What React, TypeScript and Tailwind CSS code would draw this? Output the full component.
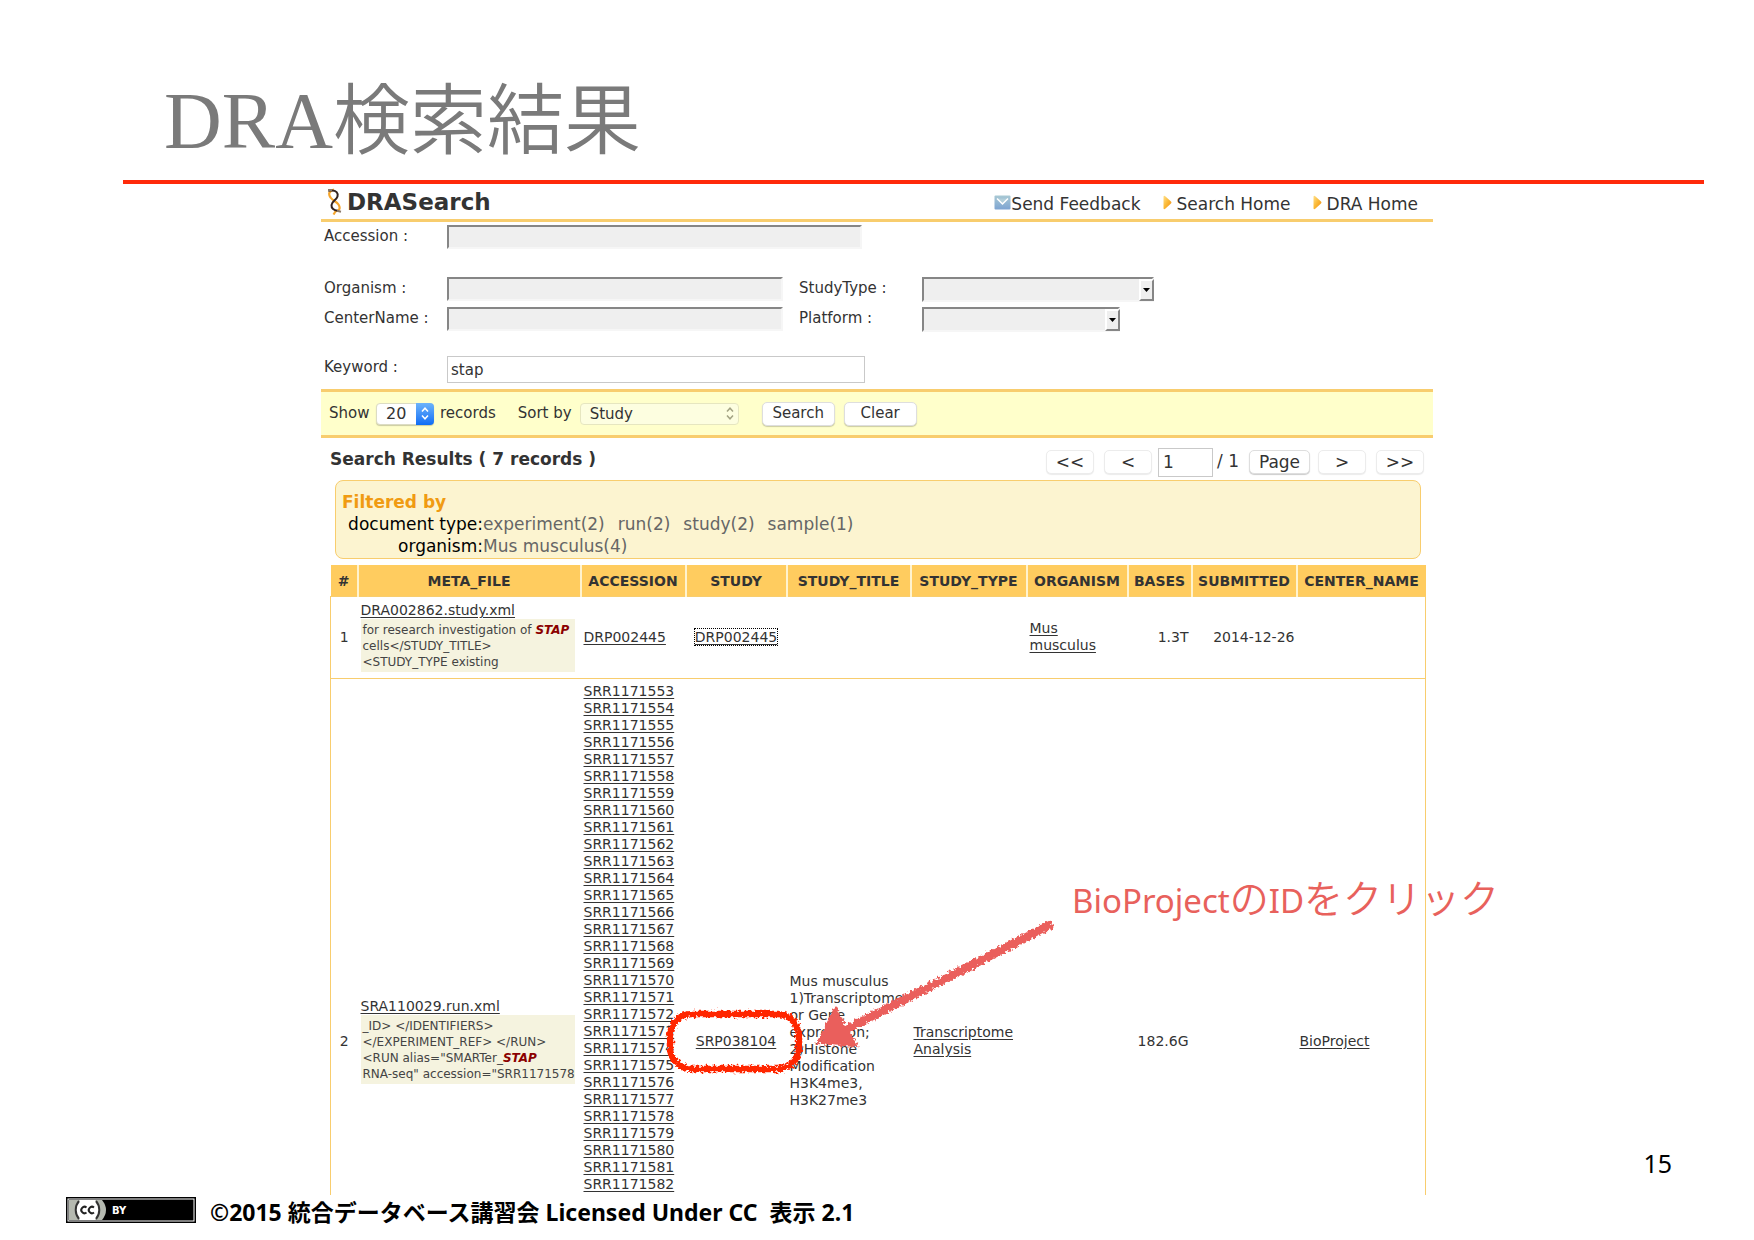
import React from "react";

const INSET =
  "block bg-[#efefef] border-2 border-t-[#868686] border-l-[#868686] border-r-[#f6f6f6] border-b-[#f6f6f6] outline-none";

const PUSH =
  "flex items-center justify-center rounded-[5px] border border-[#dedede] bg-white shadow-[0_1px_1px_rgba(0,0,0,0.2)]";

const PUSH_FAINT =
  "flex h-6 w-12 items-center justify-center rounded-[5px] border border-[#ececec] bg-white pt-0.5 shadow-[0_1px_1px_rgba(0,0,0,0.08)]";

const runs = Array.from({ length: 30 }, (_, i) => "SRR" + (1171553 + i));

function Helix() {
  return (
    <svg className="h-[27px] w-4" viewBox="0 0 16 27" fill="none" aria-hidden="true">
      <path d="M7 1.500C2 3 1 6 3.500 9.500c2 3 6 4 8 7 2.500 4 .5 6.500-3 7l-2 3" stroke="#f5a52c" strokeWidth="2.200" />
      <path d="M1 2.500h4c4 0 6.500 2.500 5.500 6C9.500 12 5 13 4.500 17c-.3 3.500 2.500 5.500 6 5.800" stroke="#33231f" strokeWidth="2" />
      <path d="M1 2h4M10 22.800l4 1" stroke="#8b7a6c" strokeWidth="2" />
    </svg>
  );
}

function Envelope() {
  return (
    <svg className="mb-1 h-[15px] w-[17px]" viewBox="0 0 17 15" aria-hidden="true">
      <defs>
        <linearGradient id="env" x1="0" y1="0" x2="0" y2="1">
          <stop offset="0" stopColor="#a9c9d4" />
          <stop offset="1" stopColor="#7da4d2" />
        </linearGradient>
      </defs>
      <rect x="0.500" y="0.500" width="16" height="14" rx="1" fill="url(#env)" />
      <path d="M3 3.500l5.500 5.500L14 3.500" fill="#b3cfda" stroke="#fff" strokeWidth="1.500" />
    </svg>
  );
}

function Marker() {
  return (
    <svg className="mb-1 h-[15px] w-[9px]" viewBox="0 0 9 15" aria-hidden="true">
      <defs>
        <linearGradient id="mark" x1="0" y1="0" x2="1" y2="1">
          <stop offset="0" stopColor="#ffe08a" />
          <stop offset="0.5" stopColor="#fbb834" />
          <stop offset="1" stopColor="#ee8a1c" />
        </linearGradient>
      </defs>
      <path d="M0.500 1.500Q1 0 2.500 1.500L8 6.500Q9 7.500 8 8.500L2.500 13.500Q1 15 0.500 13.500Z" fill="url(#mark)" />
    </svg>
  );
}

function InsetSelect({ id, width }: { id: string; width: string }) {
  return (
    <div className={"relative " + width}>
      <select id={id} className={INSET + " h-[25px] w-full appearance-none"} />
      <span className="pointer-events-none absolute top-0.5 right-0 flex h-[22px] w-[15px] items-center justify-center border-2 border-t-white border-r-[#868686] border-b-[#868686] border-l-white bg-[#efefef]">
        <svg className="h-1 w-[7px]" viewBox="0 0 7 4" aria-hidden="true">
          <path d="M0 0h7L3.500 4z" fill="#000" />
        </svg>
      </span>
    </div>
  );
}

function UpDown({ color }: { color: string }) {
  return (
    <svg className="h-[13px] w-2" viewBox="0 0 8 13" fill="none" stroke={color} strokeWidth="1.500" aria-hidden="true">
      <path d="M1 4.500L4 1.200 7 4.500M1 8.500l3 3.300L7 8.500" />
    </svg>
  );
}

function Link({ children, className = "" }: { children: React.ReactNode; className?: string }) {
  return (
    <a href="#" className={"underline underline-offset-2 " + className}>
      {children}
    </a>
  );
}

function Hit() {
  return <em className="font-bold text-[#8b0000]">STAP</em>;
}

function SearchForm() {
  const label = "w-[123px] shrink-0 leading-[22px]";
  return (
    <form className="text-[15px]" onSubmit={(e) => e.preventDefault()}>
      <div className="flex flex-col pt-[3px] pl-[3px]">
        <div className="flex items-start">
          <label htmlFor="accession" className={label}>Accession :</label>
          <input id="accession" className={INSET + " h-6 w-[415px]"} />
        </div>
        <div className="mt-7 flex items-start">
          <label htmlFor="organism" className={label}>Organism :</label>
          <input id="organism" className={INSET + " h-6 w-[336px]"} />
          <label htmlFor="studytype" className={label + " ml-4"}>StudyType :</label>
          <InsetSelect id="studytype" width="w-[232px]" />
        </div>
        <div className="mt-[5px] flex items-start">
          <label htmlFor="center" className={label}>CenterName :</label>
          <input id="center" className={INSET + " h-6 w-[336px]"} />
          <label htmlFor="platform" className={label + " ml-4"}>Platform :</label>
          <InsetSelect id="platform" width="w-[198px]" />
        </div>
        <div className="mt-6 mb-1.5 flex items-start">
          <label htmlFor="keyword" className={label}>Keyword :</label>
          <input id="keyword" defaultValue="stap" className="h-[27px] w-[418px] border border-[#c9c9c9] px-[3px] outline-none" />
        </div>
      </div>
      <div className="flex h-[49px] items-center border-y-[3px] border-[#f8cd6e] bg-[#ffffcb] pl-2">
        <label htmlFor="show" className="w-[47px]">Show</label>
        <div className="relative">
          <select id="show" className="block h-[22px] w-[58px] appearance-none rounded border border-[#dcdcc4] bg-white pl-[9px] text-[16px] leading-5 shadow-[0_1px_1px_rgba(0,0,0,0.2)]">
            <option>20</option>
          </select>
          <span className="pointer-events-none absolute top-0 right-0 flex h-[22px] w-[18px] items-center justify-center rounded-r bg-linear-to-b from-[#6cb3fa] to-[#0a6cf5]">
            <UpDown color="#fff" />
          </span>
        </div>
        <span className="ml-1.5">records</span>
        <label htmlFor="sort" className="ml-[22px]">Sort by</label>
        <div className="relative ml-2">
          <select id="sort" className="block h-[22px] w-[159px] appearance-none rounded border border-[#e6e6c0] bg-[#fdfee0] pl-[9px] leading-5">
            <option>Study</option>
          </select>
          <span className="pointer-events-none absolute top-0 right-[5px] flex h-[22px] items-center">
            <UpDown color="#a3a383" />
          </span>
        </div>
        <button type="submit" className={PUSH + " ml-[23px] h-6 w-[73px]"}>Search</button>
        <button type="button" className={PUSH + " ml-[9px] h-6 w-[73px]"}>Clear</button>
      </div>
    </form>
  );
}

function ResultsTable() {
  const th = "border-l-2 border-[#fff3cf] p-0 pt-0.5 text-center font-bold";
  const td = "px-[3px] py-0";
  const snippet = "w-[214px] bg-[#f5f3df] px-0.5 pt-[3px] pb-0.5 text-[12px] leading-4 whitespace-nowrap text-[#444]";
  return (
    <table className="w-full table-fixed border-collapse text-[14px] leading-[17px]">
      <colgroup>
        <col className="w-[27px]" />
        <col className="w-[223px]" />
        <col className="w-[105px]" />
        <col className="w-[101px]" />
        <col className="w-[124px]" />
        <col className="w-[116px]" />
        <col className="w-[101px]" />
        <col className="w-[64px]" />
        <col className="w-[105px]" />
        <col />
      </colgroup>
      <thead>
        <tr className="h-[31px] bg-[#ffcc5f]">
          <th className="p-0 pt-0.5 text-center">#</th>
          <th className={th}>META_FILE</th>
          <th className={th}>ACCESSION</th>
          <th className={th}>STUDY</th>
          <th className={th}>STUDY_TITLE</th>
          <th className={th}>STUDY_TYPE</th>
          <th className={th}>ORGANISM</th>
          <th className={th}>BASES</th>
          <th className={th}>SUBMITTED</th>
          <th className={th}>CENTER_NAME</th>
        </tr>
      </thead>
      <tbody>
        <tr className="h-[82px] border border-[#f8cd6e]">
          <td className="p-0 text-center">1</td>
          <td className={td}>
            <Link>DRA002862.study.xml</Link>
            <div className={snippet}>
              for research investigation of <Hit />
              <br />
              {"cells</STUDY_TITLE>"}
              <br />
              {"<STUDY_TYPE existing"}
            </div>
          </td>
          <td className={td}><Link>DRP002445</Link></td>
          <td className={td + " text-center"}>
            <Link className="outline-1 outline-dotted outline-black">DRP002445</Link>
          </td>
          <td className={td} />
          <td className={td} />
          <td className={td}><Link>Mus musculus</Link></td>
          <td className={td + " text-right"}>1.3T</td>
          <td className="p-0 pr-0.5 text-right">2014-12-26</td>
          <td className={td} />
        </tr>
        <tr className="h-[726px] border border-[#f8cd6e]">
          <td className="p-0 text-center">2</td>
          <td className={td}>
            <Link>SRA110029.run.xml</Link>
            <div className={snippet}>
              {"_ID> </IDENTIFIERS>"}
              <br />
              {"</EXPERIMENT_REF> </RUN>"}
              <br />
              {'<RUN alias="SMARTer_'}
              <Hit />
              <br />
              {'RNA-seq" accession="SRR1171578'}
            </div>
          </td>
          <td className="px-[3px] pt-1 align-top">
            <ul>
              {runs.map((r) => (
                <li key={r}><Link>{r}</Link></li>
              ))}
            </ul>
          </td>
          <td className={td + " text-center"}><Link>SRP038104</Link></td>
          <td className={td}>
            Mus musculus 1)Transcriptome or Gene expression; 2)Histone Modification H3K4me3, H3K27me3
          </td>
          <td className={td}><Link>Transcriptome Analysis</Link></td>
          <td className={td} />
          <td className={td + " text-right"}>182.6G</td>
          <td className={td} />
          <td className={td}><Link>BioProject</Link></td>
        </tr>
      </tbody>
    </table>
  );
}

function Annotations() {
  return (
    <>
      <svg className="pointer-events-none absolute top-[720px] left-[330px] h-[190px] w-[420px]" viewBox="0 0 420 190" fill="none" aria-hidden="true">
        <defs>
          <filter id="chalk" x="-10%" y="-10%" width="120%" height="120%">
            <feTurbulence type="fractalNoise" baseFrequency="0.35" numOctaves="2" seed="4" result="n" />
            <feDisplacementMap in="SourceGraphic" in2="n" scale="7" xChannelSelector="R" yChannelSelector="G" />
          </filter>
        </defs>
        <g filter="url(#chalk)">
          <rect x="19" y="110" width="129" height="55" rx="22" stroke="#ff2600" strokeWidth="6.500" />
          <path d="M401 20L196 125" stroke="#ea5f5b" strokeWidth="8.500" />
          <path d="M167 139L184 104L206 142Z" fill="#ea5f5b" stroke="#ea5f5b" strokeWidth="2" />
        </g>
      </svg>
      <p className="absolute top-[690px] left-[751px] font-['Noto_Sans','Noto_Sans_CJK_JP',sans-serif] text-[33px] leading-[48px] whitespace-nowrap text-[#e8615c]">
        BioProject<span className="text-[39px] font-[350]">の</span>ID
        <span className="text-[39px] font-[350]">をクリック</span>
      </p>
    </>
  );
}

function CcBadge() {
  return (
    <svg className="h-[26px] w-[130px]" viewBox="0 0 130 26" role="img" aria-label="Creative Commons BY">
      <rect width="130" height="26" fill="#000" />
      <rect x="2" y="2" width="126" height="22" fill="#000" stroke="#fff" />
      <path d="M3 3h33q4 5 4 10t-4 10H3z" fill="#b5b9b0" />
      <path d="M14 3a14 14 0 0 0 0 20h15a14 14 0 0 0 0-20z" fill="#fff" />
      <path d="M13 4a14 14 0 0 0 0 18M30 4a14 14 0 0 1 0 18" fill="none" stroke="#333" strokeWidth="2" />
      <path d="M20.500 10.500a3.200 3.200 0 1 0 0 5M28 10.500a3.200 3.200 0 1 0 0 5" fill="none" stroke="#222" strokeWidth="2" />
      <text x="46" y="17" fill="#fff" fontFamily="DejaVu Sans, sans-serif" fontWeight="bold" fontSize="10">BY</text>
    </svg>
  );
}

export default function App() {
  return (
    <div className="flex h-screen flex-col overflow-hidden bg-white font-['DejaVu_Sans','Noto_Sans_CJK_JP',sans-serif] text-[#333]">
      <h1 className="flex h-[180px] shrink-0 items-baseline pt-[61px] pl-[164px] font-['Liberation_Serif','Noto_Sans_CJK_JP',serif] text-[77px] leading-[120px] font-[350] text-[#7a7a7a]">
        <span className="text-[80px]">DRA</span>検索結果
      </h1>
      <div className="mr-[50px] ml-[123px] h-1 shrink-0 bg-[#ff2a0a]" />

      <main className="grid min-h-0 flex-1 grid-cols-[1fr_minmax(0,1112px)_1fr]">
        <div className="relative col-start-2 min-h-0">
          <div className="h-full overflow-hidden">
            <header className="flex h-[38px] items-center border-b-[3px] border-[#f8cd6e] pr-[15px] pl-1.5">
              <Helix />
              <h2 className="ml-1 text-[23px] leading-7 font-bold">DRASearch</h2>
              <nav className="ml-auto flex items-center pt-1.5 text-[17px]">
                <a href="#" className="flex items-center"><Envelope />Send Feedback</a>
                <a href="#" className="ml-[22px] flex items-center gap-[5px]"><Marker />Search Home</a>
                <a href="#" className="ml-[22px] flex items-center gap-[5px]"><Marker />DRA Home</a>
              </nav>
            </header>

            <SearchForm />

            <section className="pr-[7px] pl-[9px]">
              <div className="flex h-[42px] items-center">
                <h3 className="pt-0.5 text-[17px] font-bold">Search Results ( 7 records )</h3>
                <div className="ml-auto flex items-center pt-1.5 pr-0.5 text-[17px]">
                  <button type="button" className={PUSH_FAINT}>&lt;&lt;</button>
                  <button type="button" className={PUSH_FAINT + " ml-2.5"}>&lt;</button>
                  <input aria-label="Page number" defaultValue="1" className="ml-1.5 h-[29px] w-[55px] border border-[#c9c9c9] px-1" />
                  <span className="ml-1 w-8">/ 1</span>
                  <button type="button" className={PUSH + " h-6 w-[61px] pt-0.5"}>Page</button>
                  <button type="button" className={PUSH_FAINT + " ml-2"}>&gt;</button>
                  <button type="button" className={PUSH_FAINT + " ml-2.5"}>&gt;&gt;</button>
                </div>
              </div>

              <div className="mr-[5px] ml-[5px] h-[79px] rounded-lg border border-[#f8cd6e] bg-[#fcf4d0] pt-2.5 pl-1.5 text-[17px] leading-[22px]">
                <h4 className="font-bold text-[#f09b12]">Filtered by</h4>
                <dl className="grid grid-cols-[141px_1fr] text-[#666]">
                  <dt className="text-right text-black">document type:</dt>
                  <dd className="flex gap-[13px]">
                    <span>experiment(2)</span>
                    <span>run(2)</span>
                    <span>study(2)</span>
                    <span>sample(1)</span>
                  </dd>
                  <dt className="text-right text-black">organism:</dt>
                  <dd>Mus musculus(4)</dd>
                </dl>
              </div>

              <div className="mt-1.5">
                <ResultsTable />
              </div>
            </section>
          </div>
          <Annotations />
        </div>
        <p className="col-start-3 mr-[82px] mb-4 self-end justify-self-end font-['Noto_Sans',sans-serif] text-[25px] leading-8 text-black">
          15
        </p>
      </main>

      <footer className="flex h-[45px] shrink-0 items-start gap-3.5 pt-0.5 pl-[66px] text-black">
        <CcBadge />
        <p className="font-['Noto_Sans','Noto_Sans_CJK_JP',sans-serif] text-[23px] leading-[30px] font-bold whitespace-pre">
          {"©2015 統合データベース講習会 Licensed Under CC  表示 2.1"}
        </p>
      </footer>
    </div>
  );
}
